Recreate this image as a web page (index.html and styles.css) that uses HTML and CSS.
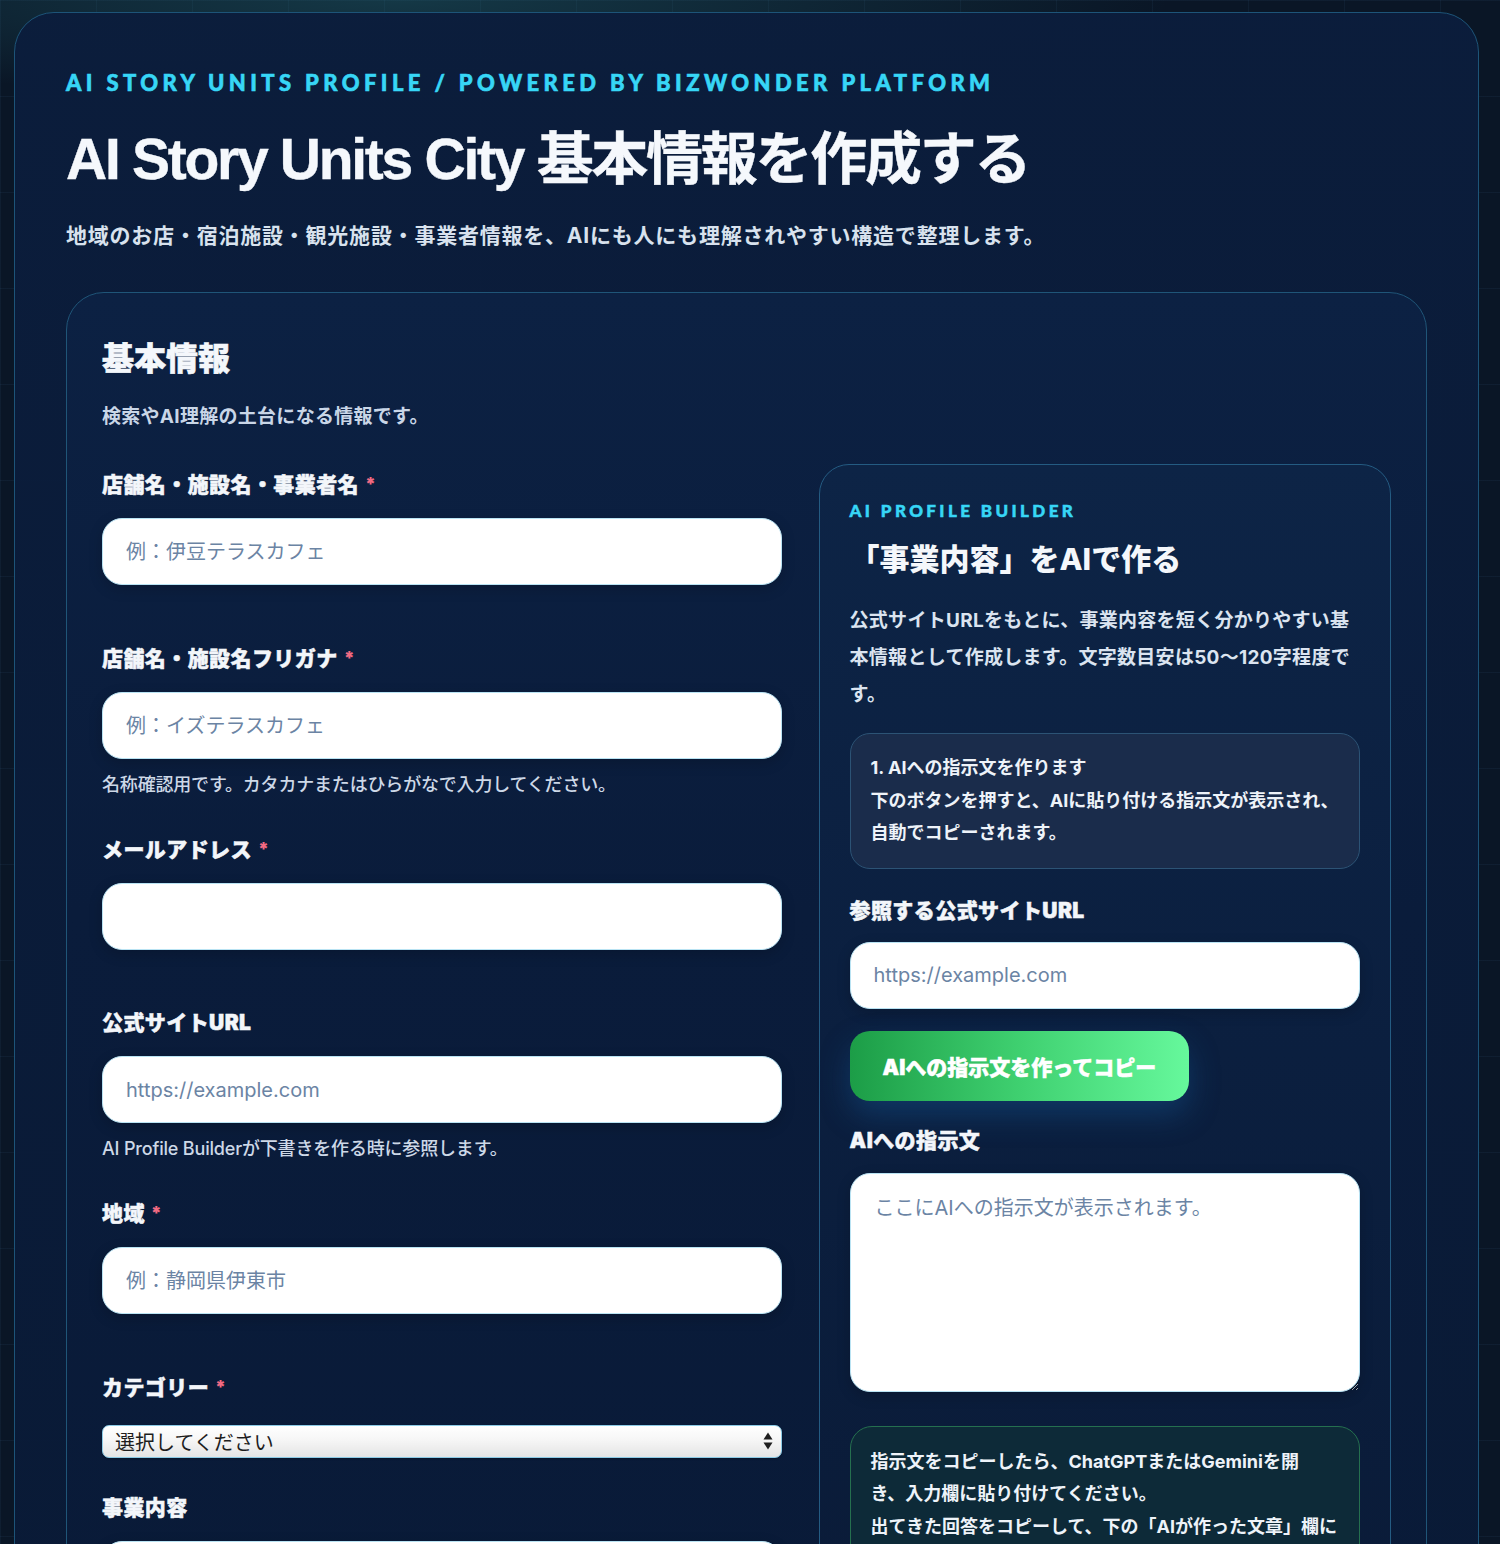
FILE: index.html
```html
<!DOCTYPE html>
<html lang="ja">
<head>
<meta charset="utf-8">
<title>AI Story Units City 基本情報を作成する</title>
<link rel="stylesheet" href="styles.css">
</head>
<body>
<div class="page">
  <main class="shell">
    <p class="eyebrow">AI STORY UNITS PROFILE / POWERED BY BIZWONDER PLATFORM</p>
    <h1 class="title">AI Story Units City 基本情報を作成する</h1>
    <p class="lead">地域のお店・宿泊施設・観光施設・事業者情報を、AIにも人にも理解されやすい構造で整理します。</p>

    <section class="card">
      <h2 class="card-title">基本情報</h2>
      <p class="card-sub">検索やAI理解の土台になる情報です。</p>

      <div class="cols">
        <div class="form-col">
          <div class="field">
            <label class="label">店舗名・施設名・事業者名<span class="req">*</span></label>
            <input class="input" type="text" placeholder="例：伊豆テラスカフェ">
          </div>
          <div class="field field--help">
            <label class="label">店舗名・施設名フリガナ<span class="req">*</span></label>
            <input class="input" type="text" placeholder="例：イズテラスカフェ">
            <p class="help">名称確認用です。カタカナまたはひらがなで入力してください。</p>
          </div>
          <div class="field">
            <label class="label">メールアドレス<span class="req">*</span></label>
            <input class="input" type="email">
          </div>
          <div class="field field--help">
            <label class="label">公式サイトURL</label>
            <input class="input" type="url" placeholder="https://example.com">
            <p class="help">AI Profile Builderが下書きを作る時に参照します。</p>
          </div>
          <div class="field">
            <label class="label">地域<span class="req">*</span></label>
            <input class="input" type="text" placeholder="例：静岡県伊東市">
          </div>
          <div class="field field--select">
            <label class="label">カテゴリー<span class="req">*</span></label>
            <div class="select-wrap">
              <select class="select">
                <option>選択してください</option>
                <option>飲食店</option>
                <option>宿泊施設</option>
                <option>観光施設</option>
              </select>
              <svg class="select-arrows" viewBox="0 0 10 20" width="10" height="20" aria-hidden="true">
                <path d="M5 1.5 L9.5 8.5 H0.5 Z" fill="#1f1f1f"/>
                <path d="M5 18.5 L9.5 11.5 H0.5 Z" fill="#1f1f1f"/>
              </svg>
            </div>
          </div>
          <div class="field">
            <label class="label">事業内容</label>
            <textarea class="textarea" placeholder="事業内容を入力してください。"></textarea>
          </div>
        </div>

        <aside class="builder">
          <p class="builder-eyebrow">AI PROFILE BUILDER</p>
          <h3 class="builder-title">「事業内容」をAIで作る</h3>
          <p class="builder-text">公式サイトURLをもとに、事業内容を短く分かりやすい基本情報として作成します。文字数目安は50〜120字程度です。</p>

          <div class="step">
            <p>1. AIへの指示文を作ります</p>
            <p>下のボタンを押すと、AIに貼り付ける指示文が表示され、自動でコピーされます。</p>
          </div>

          <label class="label builder-label">参照する公式サイトURL</label>
          <input class="input" type="url" placeholder="https://example.com">

          <button class="btn" type="button">AIへの指示文を作ってコピー</button>

          <label class="label builder-label2">AIへの指示文</label>
          <textarea class="textarea textarea--prompt" placeholder="ここにAIへの指示文が表示されます。"></textarea>

          <div class="note">
            <p>指示文をコピーしたら、ChatGPTまたはGeminiを開<br>き、入力欄に貼り付けてください。</p>
            <p>出てきた回答をコピーして、下の「AIが作った文章」欄に貼り付けてください。</p>
          </div>
        </aside>
      </div>
    </section>
  </main>
</div>
</body>
</html>
```

FILE: styles.css
```css
* { box-sizing: border-box; }

html, body { margin: 0; padding: 0; }

body {
  font-family: "Inter", "Noto Sans CJK JP", sans-serif;
  color: #e9f0f8;
  background-color: #0a1626;
  background-image:
    radial-gradient(ellipse 1100px 140px at 400px 0px, rgba(40, 120, 130, 0.35), transparent 70%),
    linear-gradient(rgba(90, 150, 200, 0.07) 1px, transparent 1px),
    linear-gradient(90deg, rgba(90, 150, 200, 0.07) 1px, transparent 1px);
  background-size: auto, 96px 96px, 96px 96px;
}

.page {
  padding: 12px 21px 40px 14px;
}

.shell {
  border: 1px solid #1d5478;
  border-radius: 40px;
  background: linear-gradient(180deg, rgba(11, 29, 60, 0.97), rgba(9, 26, 54, 0.97));
  padding: 56px 51px 60px;
}

.eyebrow {
  margin: 0;
  font-family: "Lato", "Inter", sans-serif;
  font-weight: 900;
  font-size: 22px;
  line-height: 28px;
  letter-spacing: 0.2em;
  color: #37d6f6;
  -webkit-text-stroke: 0.6px #37d6f6;
}

.title {
  margin: 28px 0 0;
  font-family: "Liberation Sans", "Noto Sans CJK JP", sans-serif;
  font-weight: 700;
  font-size: 57px;
  line-height: 68px;
  letter-spacing: -0.04em;
  color: #f5f8fc;
  -webkit-text-stroke: 0.4px #f5f8fc;
}

.lead {
  margin: 27px 0 0;
  font-size: 21px;
  line-height: 32px;
  font-weight: 700;
  letter-spacing: 0.037em;
  color: #d8e2ee;
}

.card {
  margin-top: 40px;
  border: 1px solid #1f5578;
  border-radius: 38px;
  background: linear-gradient(180deg, #0c2143 0%, #0a1c3b 40%, #091a37 100%);
  padding: 45px 35px 40px;
}

.card-title {
  margin: 0;
  font-size: 32px;
  line-height: 42px;
  font-weight: 900;
  color: #f4f7fb;
  -webkit-text-stroke: 0.6px #f4f7fb;
}

.card-sub {
  margin: 22px 0 0;
  font-size: 19px;
  line-height: 30px;
  font-weight: 700;
  letter-spacing: 0.015em;
  color: #c9d6e7;
}

.cols {
  margin-top: 32px;
  display: grid;
  grid-template-columns: 679fr 572fr;
  gap: 37px;
  align-items: start;
}

.form-col {
  padding-top: 4px;
}

.field {
  display: flex;
  flex-direction: column;
  margin-bottom: 57px;
}

.field--help { margin-bottom: 35px; }
.field--select { margin-bottom: 34px; }

.label {
  display: block;
  font-size: 21px;
  line-height: 32px;
  font-weight: 900;
  letter-spacing: 0.02em;
  color: #f3f6fa;
  -webkit-text-stroke: 0.5px #f3f6fa;
  margin-bottom: 17px;
}

.req {
  color: #f26a82;
  -webkit-text-stroke: 0;
  font-size: 18px;
  margin-left: 6px;
  vertical-align: 2px;
}

.input {
  display: block;
  width: 100%;
  height: 67px;
  border: 1.5px solid #b9e3f3;
  border-radius: 20px;
  background: #ffffff;
  padding: 0 23px;
  font-family: "Inter", "Noto Sans CJK JP", sans-serif;
  font-size: 20px;
  color: #1a2a40;
  box-shadow: 0 4px 14px rgba(0, 0, 0, 0.18);
  outline: none;
}

.input::placeholder,
.textarea::placeholder {
  color: #6b84a4;
  opacity: 1;
}

.help {
  margin: 12px 0 0;
  font-size: 18px;
  line-height: 27px;
  font-weight: 500;
  letter-spacing: -0.01em;
  color: #cdd8e7;
}

.field--select .label { margin-bottom: 21px; }

.select-wrap {
  position: relative;
}

.select {
  display: block;
  width: 100%;
  height: 33px;
  appearance: none;
  -webkit-appearance: none;
  border: 1px solid #8ccbe6;
  border-radius: 7px;
  background: linear-gradient(180deg, #ffffff 0%, #f6f6f6 45%, #e4e4e4 100%);
  padding: 0 30px 0 12px;
  font-family: "Noto Sans CJK JP", sans-serif;
  font-size: 20px;
  color: #1d1d1d;
  box-shadow: 0 1px 2px rgba(0, 0, 0, 0.3);
}

.select-arrows {
  position: absolute;
  right: 9px;
  top: 6px;
  pointer-events: none;
}

.textarea {
  display: block;
  width: 100%;
  height: 200px;
  border: 1.5px solid #b9e3f3;
  border-radius: 20px;
  background: #ffffff;
  padding: 20px 24px;
  font-family: "Inter", "Noto Sans CJK JP", sans-serif;
  font-size: 20px;
  line-height: 28px;
  color: #1a2a40;
  box-shadow: 0 4px 14px rgba(0, 0, 0, 0.18);
  outline: none;
}

.textarea--prompt { height: 219px; }

/* Builder panel */
.builder {
  border: 1px solid #245b82;
  border-radius: 30px;
  background: linear-gradient(180deg, #0d2446 0%, #0b1f3f 50%, #0a1b38 100%);
  padding: 34px 30px 40px;
}

.builder-eyebrow {
  margin: 0;
  font-family: "Lato", "Inter", sans-serif;
  font-weight: 900;
  font-size: 17px;
  line-height: 24px;
  letter-spacing: 0.2em;
  color: #37d6f6;
  -webkit-text-stroke: 0.5px #37d6f6;
}

.builder-title {
  margin: 16px 0 0;
  font-size: 30px;
  line-height: 40px;
  font-weight: 800;
  color: #f4f7fb;
}

.builder-text {
  margin: 23px 0 0;
  font-size: 19px;
  line-height: 37px;
  font-weight: 700;
  letter-spacing: 0.015em;
  color: #dbe4f0;
}

.step {
  margin-top: 20px;
  border: 1px solid #2c5375;
  border-radius: 20px;
  background: #1a2c4b;
  padding: 18px 14px 18px 20px;
}

.step p,
.note p {
  margin: 0;
  font-size: 18px;
  line-height: 32.5px;
  font-weight: 700;
  color: #eef3f9;
}

.builder-label { margin-top: 26px; margin-bottom: 15px; }
.builder-label2 { margin-top: 24px; margin-bottom: 16px; }

.btn {
  display: block;
  margin-top: 22px;
  height: 70px;
  padding: 0 33px;
  border: none;
  border-radius: 20px;
  background: linear-gradient(90deg, #1c9d47 0%, #3fd070 50%, #66f89c 100%);
  font-family: "Inter", "Noto Sans CJK JP", sans-serif;
  font-size: 21px;
  font-weight: 900;
  color: #ffffff;
  -webkit-text-stroke: 0.5px #ffffff;
  box-shadow: 0 14px 30px rgba(22, 100, 170, 0.35);
  cursor: pointer;
}

.note {
  margin-top: 34px;
  border: 1px solid #25704f;
  border-radius: 22px;
  background: #0d2a38;
  padding: 19px 20px;
}
```
